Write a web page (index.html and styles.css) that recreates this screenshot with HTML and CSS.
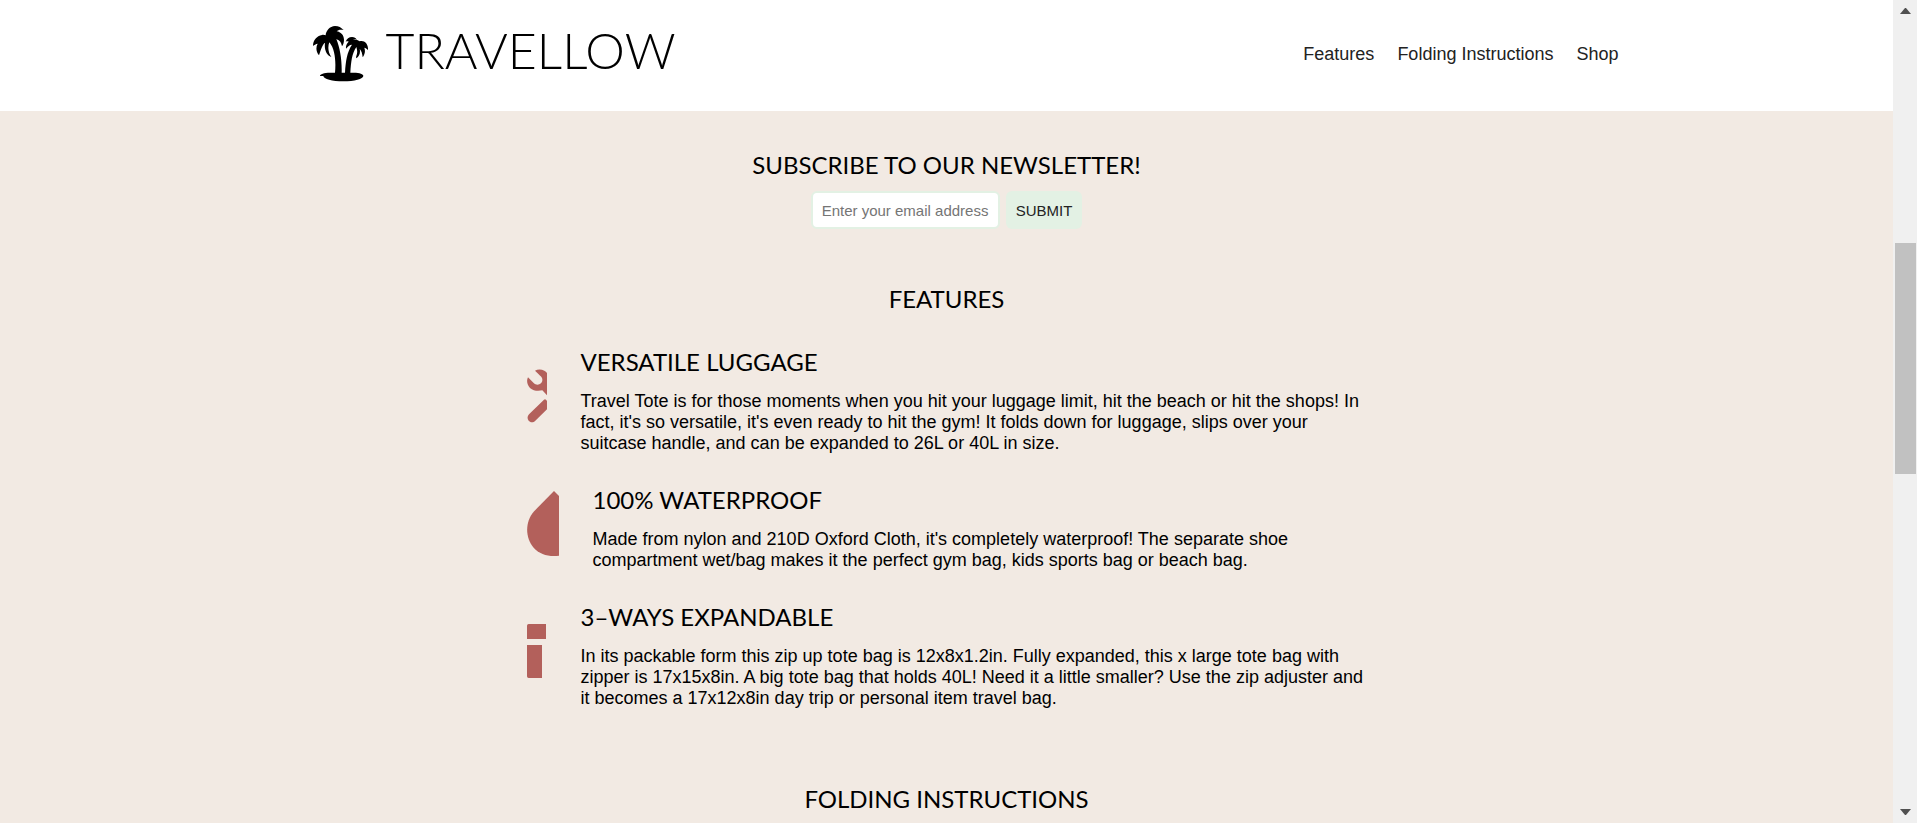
FILE: index.html
```html
<!DOCTYPE html>
<html lang="en">
<head>
<meta charset="utf-8">
<title>Travellow</title>
<link rel="stylesheet" href="styles.css">
</head>
<body>
<div class="page">
  <header class="header">
    <div class="header-inner">
      <a class="brand" href="#">
        <svg class="palm" viewBox="36 48 168 168" aria-hidden="true">
          <path d="M60 198c0-6 12-10 30-10h15c3-30 1-70-17-91-5 13-4 30 6 44-14-5-22-22-19-42-6 1-12 18-18 37-9-11-10-24-4-35-6 1-10 4-14 7 0-17 11-30 27-33 4-1 8 0 11 1 1-14 12-27 28-28 11 0 19 5 26 12-9-2-17-1-21 4 12 2 22 11 22 25 0 9-2 15-6 20-2-12-6-17-17-22 11 28 17 61 16 101h10c2-34 6-62 21-84-8 0-12 5-18 12-1-8 2-16 8-21-3-2-6-1-9 0 3-8 10-14 19-14 7 0 12 3 14 8-4-2-8-1-11 1 8-2 15-1 20 4 15-4 26 8 25 26-4-4-7-6-11-7 4 11 1 21-5 29-1-12-4-20-9-26 3 12-1 23-10 29-1-3-1-4 0-7 4-9 3-18 0-27-13 19-16 44-18 77h10c19 0 29 4 29 10 0 9-27 16-60 16s-60-7-60-16z"/>
        </svg>
        <span class="brand-name">TRAVELLOW</span>
      </a>
      <nav class="nav">
        <a href="#features">Features</a>
        <a href="#folding">Folding Instructions</a>
        <a href="#shop">Shop</a>
      </nav>
    </div>
  </header>
  <main class="main">
    <form class="newsletter">
      <h2 class="title"><label for="email">SUBSCRIBE TO OUR NEWSLETTER!</label></h2>
      <div class="fields">
        <input class="email" id="email" type="email" placeholder="Enter your email address">
        <button class="submit" type="submit">SUBMIT</button>
      </div>
    </form>
    <section class="features" id="features">
      <h2 class="title">FEATURES</h2>
      <div class="list">
        <article class="item">
          <svg class="icon icon-narrow" viewBox="0 0 60 160" aria-hidden="true">
            <path d="M24 4C32-1 43-1 52 4q5 3 8 7v67L46 63C34 66 19 65 9 56 0 46-2 34 3 24l17 17c5 5 11 6 17 4 8-3 11-11 8-19-3-5-6-7-10-11z"/>
            <path d="M60 95v25L25 154c-7 7-16 5-20 0-5-6-4-14 1-19L51 91q5-3 9 4z"/>
          </svg>
          <div class="text">
            <h3 class="title">VERSATILE LUGGAGE</h3>
            <p>Travel Tote is for those moments when you hit your luggage limit, hit the beach or hit the shops! In fact, it's so versatile, it's even ready to hit the gym! It folds down for luggage, slips over your suitcase handle, and can be expanded to 26L or 40L in size.</p>
          </div>
        </article>
        <article class="item">
          <svg class="icon icon-wide" viewBox="0 0 96 195" aria-hidden="true">
            <path d="M81 0l15 15v179C65 198 38 190 20 170-6 141-6 92 20 62z"/>
          </svg>
          <div class="text">
            <h3 class="title">100% WATERPROOF</h3>
            <p>Made from nylon and 210D Oxford Cloth, it's completely waterproof! The separate shoe compartment wet/bag makes it the perfect gym bag, kids sports bag or beach bag.</p>
          </div>
        </article>
        <article class="item">
          <svg class="icon icon-narrow" viewBox="0 0 60 162" aria-hidden="true">
            <path d="M5 0h52v45H0V5q0-5 5-5zM0 63h45v99H5q-5 0-5-5z"/>
          </svg>
          <div class="text">
            <h3 class="title">3–WAYS EXPANDABLE</h3>
            <p>In its packable form this zip up tote bag is 12x8x1.2in. Fully expanded, this x large tote bag with zipper is 17x15x8in. A big tote bag that holds 40L! Need it a little smaller? Use the zip adjuster and it becomes a 17x12x8in day trip or personal item travel bag.</p>
          </div>
        </article>
      </div>
    </section>
    <section class="folding" id="folding">
      <h2 class="title">FOLDING INSTRUCTIONS</h2>
    </section>
  </main>
</div>
<div class="scrollbar" aria-hidden="true">
  <svg class="arrow" viewBox="0 0 11 6"><path d="M0 6L5 0h1l5 6z"/></svg>
  <div class="track"><div class="thumb"></div></div>
  <svg class="arrow" viewBox="0 0 11 6"><path d="M0 0h11L6 6H5z"/></svg>
</div>
</body>
</html>
```
FILE: styles.css
```css
* { box-sizing: border-box; }

body {
  margin: 0;
  height: 100vh;
  display: flex;
  overflow: hidden;
  font-family: "Liberation Sans", Arial, sans-serif;
  font-size: 18px;
  line-height: 21px;
  color: #000;
  background: #f2eae3;
}

.page { flex: 1; min-width: 0; }

.header { background: #fff; }
.header-inner {
  max-width: 1344px;
  min-height: 111px;
  margin: 0 auto;
  padding: 0 0 3px 37px;
  display: flex;
  align-items: center;
  justify-content: space-between;
}
.brand {
  display: flex;
  align-items: center;
  gap: 18px;
  color: #000;
  text-decoration: none;
}
.palm { width: 56px; height: 56px; }
.brand-name {
  padding-bottom: 8px;
  font-family: Lato, sans-serif;
  font-weight: 300;
  font-size: 50px;
  line-height: 60px;
}
.nav { display: flex; gap: 23px; }
.nav a { color: #222; text-decoration: none; }

.title {
  margin: 0;
  font-family: Lato, sans-serif;
  font-weight: 400;
  font-size: 24px;
  line-height: 50px;
}

.newsletter { padding-top: 28px; text-align: center; }
.newsletter .title { line-height: 52px; }
.fields {
  display: flex;
  justify-content: center;
  gap: 6px;
}
.email, .submit {
  height: 38px;
  border-radius: 6px;
  font: 15px "Liberation Sans", Arial, sans-serif;
}
.email {
  width: 189px;
  padding: 0 9px;
  border: 2px solid #e3f1e4;
  background: #fff;
}
.email::placeholder { color: #757575; }
.submit {
  padding: 0 10px;
  border: 0;
  background: #e3f1e4;
  color: #222;
}

.features { padding-top: 45px; text-align: center; }
.list {
  max-width: 840px;
  margin: 13px auto 0;
  display: flex;
  flex-direction: column;
  gap: 21px;
  text-align: left;
}
.item { display: flex; align-items: center; gap: 34px; }
.icon { flex: none; fill: #b3605b; }
.icon-narrow { width: 20px; height: 54px; }
.icon-wide { width: 32px; height: 65px; }
.item p { margin: 4px 0 0; }

.folding { padding-top: 65px; text-align: center; }

.scrollbar {
  width: 24px;
  padding: 8px 0;
  display: flex;
  flex-direction: column;
  align-items: center;
  background: #f0f0f0;
}
.arrow { width: 11px; height: 6px; fill: #505050; }
.track { flex: 1; width: 21px; }
.thumb { height: 29%; margin-top: 229px; background: #c1c1c1; }
```
